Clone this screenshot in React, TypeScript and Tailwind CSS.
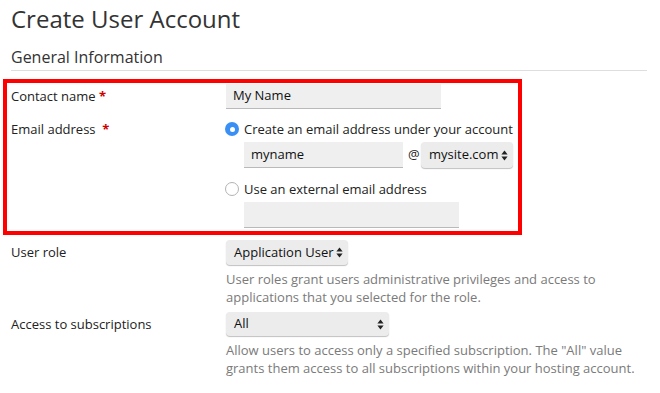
import React from "react";

function Arrows() {
  return (
    <svg width="7" height="11" viewBox="0 0 7 11" className="shrink-0">
      <path d="M3.5 0.5 L6.6 4.4 L0.4 4.4 Z" fill="#222" />
      <path d="M3.5 10.5 L6.6 6.6 L0.4 6.6 Z" fill="#222" />
    </svg>
  );
}

function FakeSelect({ value, className }: { value: string; className: string }) {
  return (
    <div
      className={
        "flex items-center justify-between rounded-[4px] bg-[#ececec] pl-[8px] pr-[5px] text-[13px] text-[#111] shadow-[0_1px_1px_rgba(0,0,0,0.25)] " +
        className
      }
    >
      <span>{value}</span>
      <Arrows />
    </div>
  );
}

function TextInput({ value, className }: { value?: string; className: string }) {
  return (
    <div
      className={
        "flex items-center bg-[#efefef] border-b border-[#b9b9b9] pl-[7px] text-[13px] text-[#111] " + className
      }
    >
      {value}
    </div>
  );
}

function Radio({ checked }: { checked: boolean }) {
  if (checked) {
    return (
      <span className="flex h-[14px] w-[14px] shrink-0 items-center justify-center rounded-full bg-[#3a8ff5]">
        <span className="h-[5px] w-[5px] rounded-full bg-white" />
      </span>
    );
  }
  return <span className="h-[14px] w-[14px] shrink-0 rounded-full border border-[#b3b3b3] bg-white" />;
}

export default function App() {
  return (
    <div className="min-h-[393px] w-[660px] bg-white pl-[11px] pr-[13px] font-['Open_Sans',sans-serif] text-[#222]">
      <div className="pt-[3px] text-[24px] leading-[32px] text-[#333]">Create User Account</div>
      <div className="mt-[10px] border-b border-[#dedede] text-[16px] leading-[24px] text-[#333] pb-[1px]">
        General Information
      </div>

      {/* highlighted block */}
      <div className="-ml-[8px] mt-[8px] w-[519px] border-4 border-[#ff0000] pl-[4px] pb-[3px]">
        <div className="grid grid-cols-[215px_1fr] pt-[1px] text-[13px]">
          <div className="leading-[24px]">
            Contact name <span className="font-bold text-[#cc0000]">*</span>
          </div>
          <TextInput value="My Name" className="h-[25px] w-[215px]" />
        </div>

        <div className="mt-[11px] grid grid-cols-[215px_1fr] text-[13px]">
          <div className="leading-[18px]">
            Email address&nbsp; <span className="font-bold text-[#cc0000]">*</span>
          </div>
          <div className="flex flex-col">
            <div className="-ml-[1px] flex items-center gap-[5px] leading-[18px]">
              <Radio checked />
              <span>Create an email address under your account</span>
            </div>
            <div className="ml-[18px] mt-[4px] flex items-center">
              <TextInput value="myname" className="h-[26px] w-[159px]" />
              <span className="ml-[5px] mr-[3px] w-[10px]">@</span>
              <FakeSelect value="mysite.com" className="h-[26px] w-[92px]" />
            </div>
            <div className="-ml-[1px] mt-[12px] flex items-center gap-[5px] leading-[18px]">
              <Radio checked={false} />
              <span>Use an external email address</span>
            </div>
            <TextInput className="ml-[18px] mt-[4px] h-[26px] w-[215px]" />
          </div>
        </div>
      </div>

      <div className="mt-[5px] grid grid-cols-[215px_1fr] text-[13px]">
        <div className="leading-[25px]">User role</div>
        <div className="flex flex-col">
          <FakeSelect value="Application User" className="h-[25px] w-[122px]" />
          <p className="mt-[5px] leading-[18px] text-[#7a7a7a]">
            User roles grant users administrative privileges and access to applications that you selected for the role.
          </p>
        </div>
      </div>

      <div className="mt-[6px] grid grid-cols-[215px_1fr] text-[13px]">
        <div className="leading-[24px]">Access to subscriptions</div>
        <div className="flex flex-col">
          <FakeSelect value="All" className="h-[24px] w-[163px]" />
          <p className="mt-[5px] leading-[18px] text-[#7a7a7a]">
            Allow users to access only a specified subscription. The "All" value grants them access to all subscriptions within your hosting account.
          </p>
        </div>
      </div>
    </div>
  );
}
